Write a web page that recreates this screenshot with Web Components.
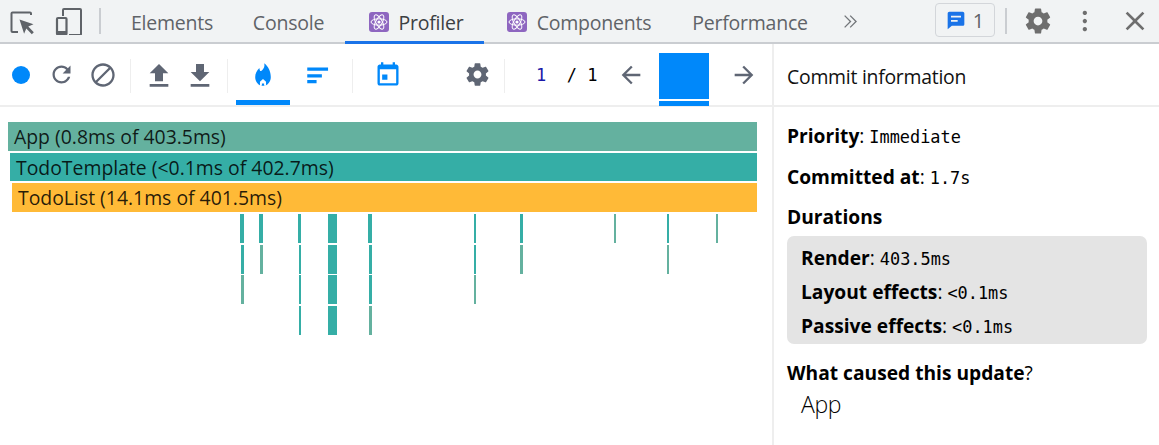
<!DOCTYPE html>
<html>
<head>
<meta charset="utf-8">
<title>Profiler</title>
<style>
  html, body { margin: 0; height: 100%; overflow: hidden; background: #fff; }
  body { font-family: "Open Sans", "Noto Sans", sans-serif; }
</style>
</head>
<body>
<devtools-app></devtools-app>
<script>
const ICONS = {
  reload: 'M17.65 6.35C16.2 4.9 14.21 4 12 4c-4.42 0-7.99 3.58-7.99 8s3.57 8 7.99 8c3.73 0 6.84-2.55 7.73-6h-2.08c-.82 2.33-3.04 4-5.65 4-3.31 0-6-2.69-6-6s2.69-6 6-6c1.66 0 3.14.69 4.22 1.78L13 11h7V4l-2.35 2.35z',
  clear: 'M12 2C6.48 2 2 6.48 2 12s4.48 10 10 10 10-4.48 10-10S17.52 2 12 2zM4 12c0-4.42 3.58-8 8-8 1.85 0 3.55.63 4.9 1.69L5.69 16.9C4.63 15.55 4 13.85 4 12zm8 8c-1.85 0-3.55-.63-4.9-1.69L18.31 7.1C19.37 8.45 20 10.15 20 12c0 4.42-3.58 8-8 8z',
  upload: 'M9 16h6v-6h4l-7-7-7 7h4zm-4 2h14v2H5z',
  download: 'M19 9h-4V3H9v6H5l7 7 7-7zM5 18v2h14v-2H5z',
  flame: 'M13.2 1.2c.5 3-.4 4.6-1.6 6C10.4 8.6 9.500 9 9 7.300 8.800 6.600 8.700 6 8.700 5.500 6.200 7.800 4.800 10.700 4.800 14c0 4.400 3.200 8 7.200 8s7.200-3.600 7.200-8c0-5.200-2.300-9.800-6-12.800zM12 15.800l2.800 2.400v3.400h-1.800v-1.800h-2v1.800H9.200v-3.400z',
  ranked: 'M3 5.100h19.200V8H3zM3 11.300h13.500v3H3zM3 16.600h8.600v3H3z',
  calendar: 'M19 3h-1V1h-2v2H8V1H6v2H5c-1.110 0-1.990.9-1.990 2L3 19c0 1.100.890 2 2 2h14c1.100 0 2-.9 2-2V5c0-1.100-.9-2-2-2zm0 16H5V7h14v12zM7 11.500h4.500V16H7z',
  gear: 'M19.43 12.98c.04-.32.07-.64.07-.98s-.03-.66-.07-.98l2.11-1.65c.19-.15.24-.42.12-.64l-2-3.46c-.12-.22-.39-.3-.61-.22l-2.49 1c-.52-.4-1.08-.73-1.69-.98l-.38-2.65C14.46 2.18 14.25 2 14 2h-4c-.25 0-.46.18-.49.42l-.38 2.65c-.61.25-1.17.59-1.69.98l-2.49-1c-.23-.09-.49 0-.61.22l-2 3.46c-.13.22-.07.49.12.64l2.11 1.65c-.04.32-.07.65-.07.98s.03.66.07.98l-2.11 1.65c-.19.15-.24.42-.12.64l2 3.46c.12.22.39.3.61.22l2.49-1c.52.4 1.08.73 1.69.98l.38 2.65c.03.24.24.42.49.42h4c.25 0 .46-.18.49-.42l.38-2.65c.61-.25 1.17-.59 1.69-.98l2.49 1c.23.09.49 0 .61-.22l2-3.46c.12-.22.07-.49-.12-.64l-2.11-1.65zM12 15.500c-1.930 0-3.500-1.570-3.500-3.500s1.570-3.500 3.500-3.500 3.500 1.570 3.500 3.500-1.570 3.500-3.500 3.500z',
  left: 'M20 11H7.830l5.590-5.590L12 4l-8 8 8 8 1.410-1.410L7.830 13H20v-2z',
  right: 'M12 4l-1.410 1.410L16.170 11H4v2h12.170l-5.580 5.590L12 20l8-8z',
  close: 'M19 6.410L17.590 5 12 10.590 6.410 5 5 6.410 10.590 12 5 17.590 6.410 19 12 13.410 17.590 19 19 17.590 13.410 12z',
  dots: 'M12 4.500a2 2 0 1 0 0 .01zM12 12a2 2 0 1 0 0 .01zM12 19.500a2 2 0 1 0 0 .01z',
  chevrons: 'M4 5.200l1.200-1.200L13.200 12l-8 8L4 18.800 10.800 12zM11 5.200l1.200-1.200L20.200 12l-8 8-1.200-1.200L17.800 12z',
  message: 'M4 2h16c1.100 0 2 .9 2 2v13c0 1.100-.9 2-2 2H7l-5 4V4c0-1.100.9-2 2-2zm2 5v2h12V7zm0 5v2h8v-2z'
};

class DtIcon extends HTMLElement {
  constructor() {
    super();
    this.attachShadow({mode: 'open'});
    const size = this.getAttribute('size') || 24;
    const d = ICONS[this.getAttribute('name')];
    this.shadowRoot.innerHTML = `
      <style>
        :host { display: block; line-height: 0; color: inherit; }
        svg { display: block; fill: currentColor; }
      </style>
      <svg width="${size}" height="${size}" viewBox="0 0 24 24"><path d="${d}"/></svg>`;
  }
}

class ReactBadge extends HTMLElement {
  constructor() {
    super();
    this.attachShadow({mode: 'open'});
    this.shadowRoot.innerHTML = `
      <style>
        :host { display: block; width: 20px; height: 20px; border-radius: 3px; background: #8e66c0; line-height: 0; }
        ellipse { fill: none; stroke: #fff; stroke-width: 1; }
      </style>
      <svg width="20" height="20" viewBox="0 0 20 20">
        <ellipse cx="10" cy="10" rx="8" ry="3.200"/>
        <ellipse cx="10" cy="10" rx="8" ry="3.200" transform="rotate(60 10 10)"/>
        <ellipse cx="10" cy="10" rx="8" ry="3.200" transform="rotate(120 10 10)"/>
        <circle cx="10" cy="10" r="1.600" fill="#fff"/>
      </svg>`;
  }
}

class DtTab extends HTMLElement {
  constructor() {
    super();
    this.attachShadow({mode: 'open'});
    this.shadowRoot.innerHTML = `
      <style>
        :host { display: flex; align-items: center; justify-content: center; gap: 10px; box-sizing: border-box;
                height: 44px; font-size: 19.500px; letter-spacing: -.22px; color: #5f6368; border-bottom: 3px solid transparent; padding-top: 3px; }
        :host([active]) { color: #3c4043; border-bottom-color: #1a73e8; }
      </style>
      <slot></slot>`;
  }
}

class DtTabbar extends HTMLElement {
  get template() {
    return `
      <style>
        :host { display: flex; align-items: flex-start; height: 44px; box-sizing: border-box; background: #f1f3f4;
                border-bottom: 2px solid #cacdd1; position: relative; color: #5f6368; }
        .tool { flex: none; height: 42px; display: flex; align-items: center; justify-content: center; }
        .sep { flex: none; width: 2px; height: 26px; margin-top: 8px; background: #cacdd1; }
        dt-tab { flex: none; margin-bottom: -2px; }
        .issues { flex: none; box-sizing: border-box; width: 60px; height: 34px; margin-top: 3px; border: 1px solid #d3d6da; border-radius: 4px;
                  display: flex; align-items: center; justify-content: center; gap: 7px; font-size: 20px; color: #5f6368; }
        .issues dt-icon { color: #1a73e8; }
      </style>
      <div class="tool" style="width:44px;margin-right:2px">
        <svg width="26" height="26" viewBox="0 0 26 26" style="margin-top:1px">
          <path d="M22 6V4.500a1 1 0 0 0-1-1H3.500a1 1 0 0 0-1 1V22a1 1 0 0 0 1 1H9" fill="none" stroke="#5f6368" stroke-width="2"/>
          <path d="M10.500 10.500l14 4.800-5.200 2.300 5.500 5.600-2 2-5.500-5.600-2.200 5.200z" fill="#5f6368"/>
        </svg>
      </div>
      <div class="tool" style="width:46px">
        <svg width="28" height="28" viewBox="0 0 28 28" style="margin-top:-1px">
          <path d="M8 9V3a1 1 0 0 1 1-1h16a1 1 0 0 1 1 1v24a1 1 0 0 1-1 1H14" fill="none" stroke="#5f6368" stroke-width="2"/>
          <rect x="2" y="11" width="9.500" height="16.500" rx="1" fill="none" stroke="#5f6368" stroke-width="2.200"/>
          <rect x="2" y="24" width="9.500" height="3.500" fill="#5f6368"/>
        </svg>
      </div>
      <div class="tool" style="width:7px"></div>
      <div class="sep"></div>
      <div class="tool" style="width:11px"></div>
      <dt-tab style="width:120px">Elements</dt-tab>
      <dt-tab style="width:113px">Console</dt-tab>
      <dt-tab style="width:139px;padding-left:3px" active><react-badge></react-badge>Profiler</dt-tab>
      <dt-tab style="width:188px;padding-left:2px"><react-badge></react-badge>Components</dt-tab>
      <dt-tab style="width:154px;padding-left:2px">Performance</dt-tab>
      <div class="tool" style="width:48px"><dt-icon name="chevrons" size="19" style="color:#73767a"></dt-icon></div>
      <div class="tool" style="width:61px"></div>
      <div class="issues"><dt-icon name="message" size="20"></dt-icon>1</div>
      <div class="tool" style="width:10px"></div>
      <div class="sep"></div>
      <div class="tool" style="width:9px"></div>
      <div class="tool" style="width:44px;color:#6e6e6e"><dt-icon name="gear" size="30"></dt-icon></div>
      <div class="tool" style="width:54px;color:#6e6e6e"><dt-icon name="dots" size="26"></dt-icon></div>
      <div class="tool" style="width:41px;color:#6e6e6e"><dt-icon name="close" size="32"></dt-icon></div>`;
  }
  constructor() {
    super();
    this.attachShadow({mode: 'open'});
    this.shadowRoot.innerHTML = this.template;
  }
}

class ProfilerToolbar extends HTMLElement {
  get template() {
    return `
      <style>
        :host { display: flex; align-items: stretch; height: 63px; box-sizing: border-box; border-bottom: 2px solid #eeeeee; color: #5f6674; position: relative; }
        .btn { flex: none; display: flex; align-items: center; justify-content: center; height: 61px; box-sizing: border-box; }
        .sep { flex: none; width: 1px; height: 34px; margin-top: 15px; background: #eeeeee; }
        .on { color: #0088fa; }
        .low { padding-top: 2px; }
        .tab { border-bottom: 5px solid #0088fa; padding-top: 5px; }
        .rec { width: 18px; height: 18px; border-radius: 50%; background: #0088fa; }
        .count { flex: none; width: 84px; margin-left: 31px; display: flex; align-items: center; height: 61px; white-space: pre;
                 font-family: "DejaVu Sans Mono", monospace; font-size: 17px; color: #000; }
        .count b { font-weight: 400; color: #1a18a8; }
        .commit { flex: none; width: 50px; height: 53px; margin-top: 9px; display: flex; flex-direction: column; gap: 2px; }
        .commit i { display: block; background: #0088fa; }
        .commit i:first-child { flex: 1; }
        .commit i:last-child { height: 5px; }
      </style>
      <div class="btn" style="width:41px"><div class="rec"></div></div>
      <div class="btn" style="width:41px"><dt-icon name="reload" size="27"></dt-icon></div>
      <div class="btn" style="width:41px"><dt-icon name="clear" size="28"></dt-icon></div>
      <div class="btn" style="width:7px"></div><div class="sep"></div>
      <div class="btn" style="width:7px"></div>
      <div class="btn low" style="width:41px"><dt-icon name="upload" size="32"></dt-icon></div>
      <div class="btn low" style="width:41px"><dt-icon name="download" size="32"></dt-icon></div>
      <div class="btn" style="width:7px"></div><div class="sep"></div>
      <div class="btn" style="width:8px"></div>
      <div class="btn on tab" style="width:54px"><dt-icon name="flame" size="26"></dt-icon></div>
      <div class="btn on" style="width:54px"><dt-icon name="ranked" size="26"></dt-icon></div>
      <div class="btn" style="width:8px"></div><div class="sep"></div>
      <div class="btn on" style="width:70px"><dt-icon name="calendar" size="28"></dt-icon></div>
      <div class="btn" style="width:27px"></div>
      <div class="btn" style="width:54px"><dt-icon name="gear" size="27"></dt-icon></div>
      <div class="sep"></div>
      <div class="count"><span><b>1</b>  / 1</span></div>
      <div class="btn" style="width:22px"><dt-icon name="left" size="28"></dt-icon></div>
      <div class="btn" style="width:17px"></div>
      <div class="commit"><i></i><i></i></div>
      <div class="btn" style="width:24px"></div>
      <div class="btn" style="width:22px"><dt-icon name="right" size="28"></dt-icon></div>`;
  }
  constructor() {
    super();
    this.attachShadow({mode: 'open'});
    this.shadowRoot.innerHTML = this.template;
  }
}

class FlameBar extends HTMLElement {
  constructor() {
    super();
    this.attachShadow({mode: 'open'});
    this.shadowRoot.innerHTML = `
      <style>
        :host { position: absolute; box-sizing: border-box; overflow: hidden; white-space: nowrap; height: 29px;
                font-size: 19.400px; line-height: 30px; padding-left: 6px; color: rgba(0,0,0,.85); }
      </style>
      <slot></slot>`;
  }
}

const TEAL = '#35aea6', GREEN = '#64b19f';
// row, x1, x2, colour (the chart is a free canvas, bars sit at their x)
const SMALL_BARS = [
  [3,240,244,TEAL],[3,259,263,TEAL],[3,298,301,TEAL],[3,327.500,337,TEAL],[3,368,372,TEAL],
  [3,473.500,476,TEAL],[3,520,523,TEAL],[3,614,616,GREEN],[3,666.500,669,TEAL],[3,716,718,GREEN],
  [4,241,244,TEAL],[4,260,263,GREEN],[4,299,301,TEAL],[4,328,337,TEAL],[4,369,372,TEAL],
  [4,473.500,476,TEAL],[4,520,523,GREEN],[4,666.500,668.500,GREEN],
  [5,241,244,GREEN],[5,299,301,TEAL],[5,328,337,TEAL],[5,369,372,TEAL],[5,473.500,476,GREEN],
  [6,299,301,TEAL],[6,328,337,TEAL],[6,369,372,GREEN]
];

class FlameChart extends HTMLElement {
  constructor() {
    super();
    this.attachShadow({mode: 'open'});
    this.shadowRoot.innerHTML = `
      <style>
        :host { display: block; position: relative; height: 100%; }
      </style>
      <flame-bar style="left:8px;width:749px;top:15px;background:#64b19f">App (0.8ms of 403.5ms)</flame-bar>
      <flame-bar style="left:10px;width:747px;top:46px;height:28px;background:#35aea6">TodoTemplate (&lt;0.1ms of 402.7ms)</flame-bar>
      <flame-bar style="left:12px;width:745px;top:76px;background:#ffba37">TodoList (14.1ms of 401.5ms)</flame-bar>`;
    for (const [row, x1, x2, color] of SMALL_BARS) {
      const bar = document.createElement('flame-bar');
      const top = [0, 0, 0, 107, 138, 168, 199][row];
      bar.style.cssText = `left:${x1}px;width:${x2 - x1}px;top:${top}px;background:${color};padding:0`;
      this.shadowRoot.appendChild(bar);
    }
  }
}

class InfoRow extends HTMLElement {
  constructor() {
    super();
    this.attachShadow({mode: 'open'});
    this.shadowRoot.innerHTML = `
      <style>
        :host { display: block; font-size: 19.200px; line-height: 26px; color: #000; white-space: nowrap; }
        b { font-weight: 700; }
        code { font-family: "DejaVu Sans Mono", monospace; font-size: 16.900px; line-height: 1; }
      </style>
      <b>${this.getAttribute('label')}</b>${this.getAttribute('sep') || ':'}
      <code><slot></slot></code>`;
  }
}

class CommitInfo extends HTMLElement {
  get template() {
    return `
      <style>
        :host { display: flex; flex: none; flex-direction: column; width: 387px; height: 100%; box-sizing: border-box; border-left: 2px solid #eeeeee; color: #000; }
        header { height: 63px; box-sizing: border-box; border-bottom: 2px solid #eeeeee; padding: 3px 14px 0 13px; display: flex; align-items: center;
                 font-size: 19.400px; letter-spacing: -.25px; color: #111; }
        main { padding: 16px 12px 0 13px; display: flex; flex-direction: column; }
        info-row { margin-bottom: 14.500px; }
        .box { background: #e4e4e4; border-radius: 7px; margin-top: -9px; padding: 9px 14px 5px; display: flex; flex-direction: column; gap: 8px; margin-bottom: 16px; }
        .box info-row { margin-bottom: 0; }
        .cause { margin-bottom: 0; }
        .who { padding-left: 14px; font-size: 23px; line-height: 36px; letter-spacing: -.4px; font-weight: 300; color: #000; }
      </style>
      <header>Commit information</header>
      <main>
        <info-row label="Priority">Immediate</info-row>
        <info-row label="Committed at">1.7s</info-row>
        <info-row label="Durations" sep=" "></info-row>
        <div class="box">
          <info-row label="Render">403.5ms</info-row>
          <info-row label="Layout effects">&lt;0.1ms</info-row>
          <info-row label="Passive effects">&lt;0.1ms</info-row>
        </div>
        <info-row class="cause" label="What caused this update" sep="?"></info-row>
        <div class="who">App</div>
      </main>`;
  }
  constructor() {
    super();
    this.attachShadow({mode: 'open'});
    this.shadowRoot.innerHTML = this.template;
  }
}

class DevtoolsApp extends HTMLElement {
  constructor() {
    super();
    this.attachShadow({mode: 'open'});
    this.shadowRoot.innerHTML = `
      <style>
        :host { display: grid; grid-template-rows: 44px 1fr; height: 445px; width: 100%; overflow: hidden; }
        .body { display: flex; min-height: 0; }
        .left { flex: 0 0 772px; min-width: 0; display: flex; flex-direction: column; }
        flame-chart { flex: 1; }
      </style>
      <dt-tabbar></dt-tabbar>
      <div class="body">
        <div class="left">
          <profiler-toolbar></profiler-toolbar>
          <flame-chart></flame-chart>
        </div>
        <commit-info></commit-info>
      </div>`;
  }
}

customElements.define('dt-icon', DtIcon);
customElements.define('react-badge', ReactBadge);
customElements.define('dt-tab', DtTab);
customElements.define('dt-tabbar', DtTabbar);
customElements.define('profiler-toolbar', ProfilerToolbar);
customElements.define('flame-bar', FlameBar);
customElements.define('flame-chart', FlameChart);
customElements.define('info-row', InfoRow);
customElements.define('commit-info', CommitInfo);
customElements.define('devtools-app', DevtoolsApp);
</script>
</body>
</html>
